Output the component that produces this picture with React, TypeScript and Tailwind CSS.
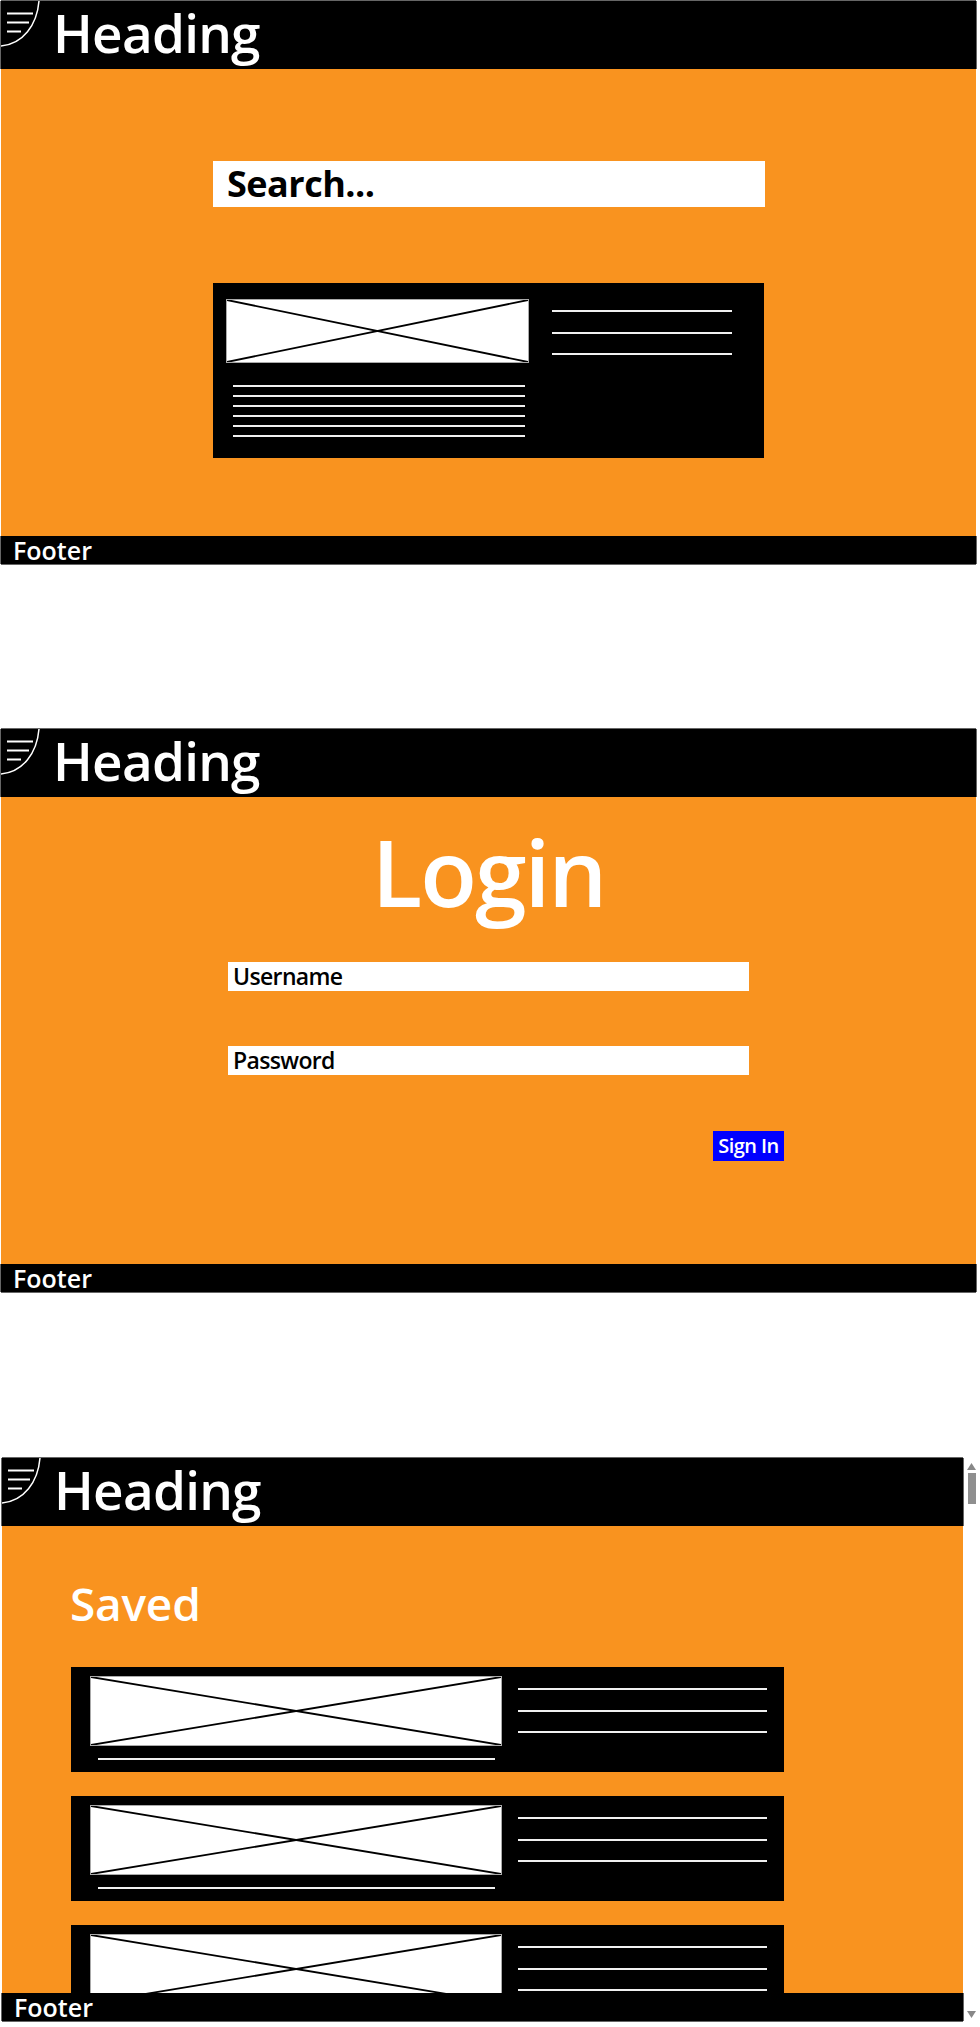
import React from 'react';

const font = "[font-family:'Open_Sans',sans-serif] font-semibold";

const Line = ({ className }: { className: string }) => <div className={`h-[2px] bg-[#f0f0f0] ${className}`}></div>;

// crossed box used as the image placeholder
const ImageBox = ({ className }: { className: string }) => (
    <div className={`shrink-0 bg-white border border-[#aaaaaa] ${className}`}>
        <svg className="block w-full h-full" viewBox="0 0 100 100" preserveAspectRatio="none">
            <line x1="0" y1="0" x2="100" y2="100" stroke="black" strokeWidth="1.8" vectorEffect="non-scaling-stroke" />
            <line x1="100" y1="0" x2="0" y2="100" stroke="black" strokeWidth="1.8" vectorEffect="non-scaling-stroke" />
        </svg>
    </div>
);

const Header = () => (
    <header className="flex shrink-0 items-start h-[68px] bg-black shadow-[1px_0_0_#666666,-1px_0_0_#666666,0_-1px_0_#666666]">
        <svg className="shrink-0" width="40" height="46" viewBox="0 0 40 46" fill="none" stroke="white">
            <path d="M38 0 C36 24 22 43 0 45" strokeWidth="1.5" />
            <path d="M6 12.5 H32 M6 21.5 H28 M6 30.5 H20" strokeWidth="1.8" />
        </svg>
        <h1 className={`${font} tracking-[-0.014em] ml-[12px] text-[53px] leading-[64px] text-white`}>Heading</h1>
    </header>
);

const Footer = () => (
    <footer className={`${font} shrink-0 h-[28px] bg-black pl-[12px] text-[25px] leading-[28px] text-white shadow-[1px_0_0_#666666,-1px_0_0_#666666,0_1px_0_#666666]`}>Footer</footer>
);

const SavedCard = () => (
    <div className="flex shrink-0 w-[713px] h-[105px] bg-black pl-[19px] pt-[9px]">
        <div className="w-[412px]">
            <ImageBox className="w-[412px] h-[70px]" />
            <Line className="ml-[8px] mt-[12px] w-[397px]" />
        </div>
        <div className="ml-[16px] pt-[12px] flex flex-col gap-[19.5px]">
            <Line className="w-[249px]" />
            <Line className="w-[249px]" />
            <Line className="w-[249px]" />
        </div>
    </div>
);

const App = () => {
    return (
        <div className="w-[980px] h-[2027px] bg-white overflow-hidden">
            {/* search page */}
            <section className="flex flex-col w-[975px] h-[563px] ml-px mt-px">
                <Header />
                <main className="flex-1 bg-[#f9931f] pl-[212px] pt-[92px]">
                    <div className={`${font} tracking-[-0.014em] flex items-center w-[552px] h-[46px] bg-white pl-[14px] text-[36px] !font-bold text-black`}>Search...</div>
                    <div className="flex w-[551px] h-[175px] mt-[76px] bg-black pl-[13px] pt-[16px]">
                        <div className="w-[303px]">
                            <ImageBox className="w-[303px] h-[64px]" />
                            <div className="flex flex-col gap-[8px] ml-[7px] mt-[22px]">
                                <Line className="w-[292px]" />
                                <Line className="w-[292px]" />
                                <Line className="w-[292px]" />
                                <Line className="w-[292px]" />
                                <Line className="w-[292px]" />
                                <Line className="w-[292px]" />
                            </div>
                        </div>
                        <div className="flex flex-col gap-[19.5px] ml-[23px] pt-[11px]">
                            <Line className="w-[180px]" />
                            <Line className="w-[180px]" />
                            <Line className="w-[180px]" />
                        </div>
                    </div>
                </main>
                <Footer />
            </section>

            {/* login page */}
            <section className="flex flex-col w-[975px] h-[563px] ml-px mt-[165px]">
                <Header />
                <main className="flex-1 bg-[#f9931f]">
                    <h2 className={`${font} tracking-[-0.022em] text-center text-[93px] leading-[127px] mt-[-1px] pt-[12px] text-white`}>Login</h2>
                    <div className={`${font} tracking-[-0.028em] flex items-center w-[521px] h-[29px] ml-[227px] mt-[27px] bg-white pl-[5px] text-[23px] text-black`}>Username</div>
                    <div className={`${font} tracking-[-0.028em] flex items-center w-[521px] h-[29px] ml-[227px] mt-[55px] bg-white pl-[5px] text-[23px] text-black`}>Password</div>
                    <div className="flex justify-end w-[783px] mt-[56px]">
                        <button className={`${font} tracking-[-0.028em] w-[71px] h-[30px] bg-[#0000ff] text-[20px] leading-[30px] text-white`}>Sign In</button>
                    </div>
                </main>
                <Footer />
            </section>

            {/* saved page, scrolled inside its own frame */}
            <section className="flex h-[563px] ml-[2px] mt-[166px]">
                <div className="flex flex-col w-[961px] h-full">
                    <Header />
                    <main className="flex-1 min-h-0 overflow-hidden bg-[#f9931f] pl-[69px]">
                        <h2 className={`${font} tracking-[-0.005em] ml-[-1px] text-[46px] leading-[62px] mt-[46px] text-white`}>Saved</h2>
                        <div className="flex flex-col gap-[24px] mt-[33px]">
                            <SavedCard />
                            <SavedCard />
                            <SavedCard />
                        </div>
                    </main>
                    <Footer />
                </div>
                <div className="flex flex-col items-center justify-between w-[15px] ml-[1px] pt-[5px] pb-[3px]">
                    <div className="flex flex-col items-center gap-[3px]">
                        <svg width="9" height="7" viewBox="0 0 9 7"><path d="M4.5 0 L9 7 H0 Z" fill="#888888" /></svg>
                        <div className="w-[8px] h-[31px] bg-[#8f8f8f]"></div>
                    </div>
                    <svg width="9" height="7" viewBox="0 0 9 7"><path d="M4.5 7 L9 0 H0 Z" fill="#888888" /></svg>
                </div>
            </section>
        </div>
    );
};

export default App;
